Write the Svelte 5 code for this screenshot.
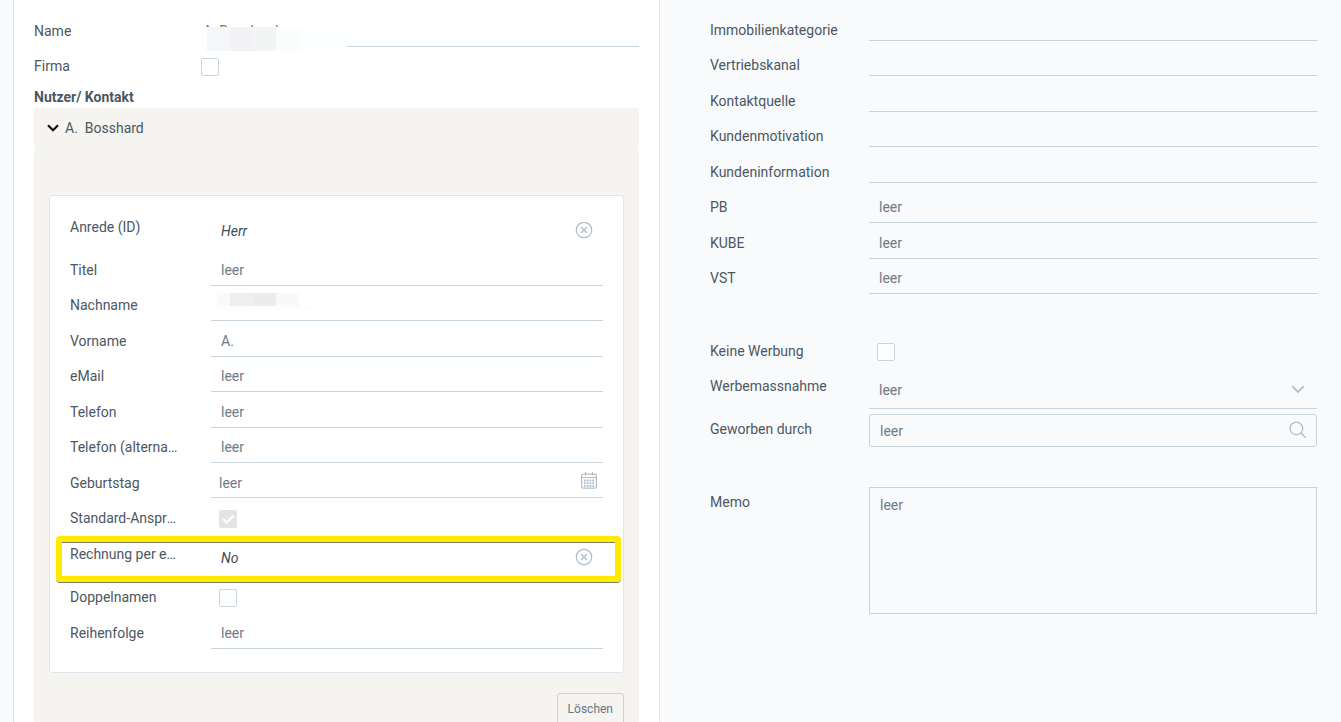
<script>
    let contact = $state({
        anrede: 'Herr',
        titel: '',
        nachname: '',
        vorname: 'A.',
        email: '',
        telefon: '',
        telefonAlt: '',
        geburtstag: '',
        rechnung: 'No',
        reihenfolge: ''
    });

    let open = $state(true);
    let name = $state('A. Bosshard');

    const contactRows = [
        { id: 'anrede', label: 'Anrede (ID)', type: 'clear' },
        { id: 'titel', label: 'Titel', type: 'text' },
        { id: 'nachname', label: 'Nachname', type: 'masked' },
        { id: 'vorname', label: 'Vorname', type: 'text' },
        { id: 'email', label: 'eMail', type: 'text' },
        { id: 'telefon', label: 'Telefon', type: 'text' },
        { id: 'telefonAlt', label: 'Telefon (alternativ)', type: 'text' },
        { id: 'geburtstag', label: 'Geburtstag', type: 'date' },
        { id: 'standard', label: 'Standard-Ansprechpartner', type: 'check', checked: true },
        { id: 'rechnung', label: 'Rechnung per eMail', type: 'clear', highlight: true },
        { id: 'doppelnamen', label: 'Doppelnamen', type: 'check' },
        { id: 'reihenfolge', label: 'Reihenfolge', type: 'text' }
    ];

    const infoRows = [
        { id: 'kategorie', label: 'Immobilienkategorie', empty: true },
        { id: 'kanal', label: 'Vertriebskanal', empty: true },
        { id: 'quelle', label: 'Kontaktquelle', empty: true },
        { id: 'motivation', label: 'Kundenmotivation', empty: true },
        { id: 'information', label: 'Kundeninformation', empty: true },
        { id: 'pb', label: 'PB' },
        { id: 'kube', label: 'KUBE' },
        { id: 'vst', label: 'VST' }
    ];
</script>

<main>
    <section class="panel">
        <div class="rows wide">
            <div class="row">
                <label for="name">Name</label>
                <div class="control">
                    <input id="name" type="text" bind:value={name} />
                    <svg class="mask name-mask" width="160" height="25" aria-hidden="true">
                        <rect width="160" height="25" fill="#fff" />
                        <rect x="20" width="23" height="24" fill="#f5f6f8" />
                        <rect x="43" width="23" height="24" fill="#f2f2f4" />
                        <rect x="66" width="23" height="24" fill="#f3f4f4" />
                        <rect x="89" y="3" width="24" height="21" fill="#fbfcfc" />
                        <rect x="113" y="3" width="47" height="21" fill="#fdfefe" />
                    </svg>
                </div>
            </div>
            <div class="row">
                <label for="firma">Firma</label>
                <div class="control"><input id="firma" type="checkbox" /></div>
            </div>
        </div>

        <h2>Nutzer/ Kontakt</h2>
        <button class="accordion" aria-expanded={open} onclick={() => (open = !open)}>
            <svg width="12" height="8" viewBox="0 0 12 8" aria-hidden="true">
                <path d="M1 1.2 6 6.2 11 1.2" fill="none" stroke="#111" stroke-width="2.2" />
            </svg>
            <span>A.&nbsp; Bosshard</span>
        </button>

        {#if open}
            <div class="accordion-body">
                <div class="card rows">
                    {#each contactRows as row (row.id)}
                        <div class="row" class:tall={row.type === 'clear'} class:highlight={row.highlight}>
                            <label for={row.id}>{row.label}</label>
                            <div class="control">
                                {#if row.type === 'check'}
                                    <input id={row.id} type="checkbox" checked={row.checked} disabled={row.checked} />
                                {:else if row.type === 'clear'}
                                    <input id={row.id} class="chosen" type="text" bind:value={contact[row.id]} />
                                    <button class="icon clear" aria-label="{row.label} leeren" onclick={() => (contact[row.id] = '')}>
                                        <svg width="18" height="18" viewBox="0 0 18 18" fill="none" stroke="#b0bfcc" aria-hidden="true">
                                            <circle cx="9" cy="9" r="7.7" stroke-width="1.3" />
                                            <path d="M6.1 6.1 11.9 11.9M11.9 6.1 6.1 11.9" stroke-width="1.4" />
                                        </svg>
                                    </button>
                                {:else if row.type === 'date'}
                                    <input id={row.id} class="date" type="text" placeholder="leer" bind:value={contact[row.id]} />
                                    <button class="icon calendar" aria-label="Kalender">
                                        <svg width="16" height="17" viewBox="0 0 16 17" fill="none" stroke="#b0bfcc" aria-hidden="true">
                                            <rect x="0.6" y="2.2" width="14.8" height="14" rx="1.6" stroke-width="1.2" />
                                            <path d="M1 5.5H15M4.5 0V3.6M11.5 0V3.6" stroke-width="1.1" />
                                            <path d="M2.9 8.5H13.1M2.9 11.2H13.1M2.9 13.9H13.1" stroke-width="1.8" stroke-dasharray="1.8 1" />
                                        </svg>
                                    </button>
                                {:else}
                                    <input id={row.id} type="text" placeholder={row.type === 'masked' ? '' : 'leer'} bind:value={contact[row.id]} />
                                    {#if row.type === 'masked'}
                                        <svg class="mask field-mask" width="100" height="17" aria-hidden="true">
                                            <rect width="13" height="13" fill="#f9fafa" />
                                            <rect x="13" width="23" height="13" fill="#eeeff1" />
                                            <rect x="36" width="23" height="13" fill="#ebecee" />
                                            <rect x="59" width="23" height="13" fill="#f9f9fa" />
                                            <rect y="13" width="100" height="4" fill="#fdfdfd" />
                                        </svg>
                                    {/if}
                                {/if}
                            </div>
                        </div>
                    {/each}
                </div>
                <button class="delete">Löschen</button>
            </div>
        {/if}
    </section>

    <section class="info">
        <div class="rows wide">
            {#each infoRows as row (row.id)}
                <div class="row" class:low={row.empty}>
                    <label for={row.id}>{row.label}</label>
                    <div class="control">
                        <input id={row.id} type="text" placeholder={row.empty ? '' : 'leer'} />
                    </div>
                </div>
            {/each}
        </div>

        <div class="rows wide">
            <div class="row">
                <label for="werbung">Keine Werbung</label>
                <div class="control"><input id="werbung" type="checkbox" /></div>
            </div>
            <div class="row tall">
                <label for="massnahme">Werbemassnahme</label>
                <div class="control">
                    <select id="massnahme">
                        <option>leer</option>
                    </select>
                    <svg class="icon arrow" width="14" height="9" viewBox="0 0 14 9" aria-hidden="true">
                        <path d="M1.3 1.3 7 7 12.7 1.3" fill="none" stroke="#b0bfcc" stroke-width="1.9" />
                    </svg>
                </div>
            </div>
            <div class="row">
                <label for="geworben">Geworben durch</label>
                <div class="control">
                    <input id="geworben" class="boxed" type="text" placeholder="leer" />
                    <button class="icon search" aria-label="Suchen">
                        <svg width="18" height="18" viewBox="0 0 18 18" fill="none" stroke="#b0bfcc" aria-hidden="true">
                            <circle cx="7.4" cy="7.4" r="6.3" stroke-width="1.3" />
                            <path d="M11.8 11.8 16.8 16.8" stroke-width="1.6" />
                        </svg>
                    </button>
                </div>
            </div>
        </div>

        <div class="rows wide">
            <div class="row">
                <label for="memo">Memo</label>
                <div class="control"><textarea id="memo" placeholder="leer"></textarea></div>
            </div>
        </div>
    </section>
</main>

<style>
    :global(body) {
        background: #f9fafc;
    }

    main {
        display: grid;
        grid-template-columns: 1fr 1fr;
        gap: 10px;
        height: 100vh;
        padding: 0 24px 0 13px;
        box-sizing: border-box;
        overflow: hidden;
        color: #4b5763;
        font: 14px/20px Roboto, sans-serif;
    }

    .panel {
        padding: 13px 20px 0;
        background: #fff;
        border: 1px solid #dfe5eb;
        border-width: 0 1px;
    }

    .info {
        display: flex;
        flex-direction: column;
        gap: 37px;
        padding: 12px 0 0 40px;
    }

    .row {
        position: relative;
        display: grid;
        grid-template-columns: 141px 1fr;
        min-height: 36px;
    }

    .wide .row {
        grid-template-columns: 159px 1fr;
    }

    .card .row:nth-child(even),
    .wide .row:nth-child(odd) {
        min-height: 35px;
    }

    .rows .row.tall {
        min-height: 43px;
    }

    label {
        max-width: 108px;
        height: 35px;
        line-height: 36px;
        overflow: hidden;
        text-overflow: ellipsis;
        white-space: nowrap;
    }

    .wide label {
        max-width: none;
    }

    .control {
        position: relative;
    }

    input,
    select,
    textarea,
    button {
        margin: 0;
        box-sizing: border-box;
        background: none;
        color: inherit;
        font: inherit;
        border-radius: 0;
        outline: none;
    }

    input[type='text'],
    select {
        display: block;
        width: 100%;
        height: 34px;
        padding: 2px 10px 0;
        border: 0;
        border-bottom: 1px solid #c7d4dd;
        color: #6b7782;
    }

    ::placeholder {
        color: #6f7b86;
        opacity: 1;
    }

    .low input[type='text'] {
        height: 29px;
    }

    .tall select {
        height: 41px;
        padding: 4px 10px 0;
        appearance: none;
    }

    .tall input.chosen {
        height: 42px;
        padding-top: 2px;
        border: 0;
        color: #404c58;
        font-style: italic;
    }

    input[type='text'].date {
        height: 33px;
        padding: 4px 8px 0;
    }

    input[type='text'].boxed {
        height: 33px;
        margin-top: 3px;
        padding: 0 10px;
        border: 1px solid #c7d4dd;
        border-radius: 3px;
    }

    textarea {
        display: block;
        width: 100%;
        height: 127px;
        margin-top: 3px;
        padding: 7px 10px;
        border: 1px solid #c7d4dd;
        resize: none;
    }

    input[type='checkbox'] {
        display: grid;
        place-items: center;
        width: 18px;
        height: 18px;
        margin: 10px 0 0 8px;
        appearance: none;
        background: #fff;
        border: 1px solid #c7d4dd;
        border-radius: 2px;
    }

    input[type='checkbox']:disabled {
        background: #e4e4e4;
        border-color: #e4e4e4;
    }

    input[type='checkbox']:checked::before {
        content: '';
        width: 9px;
        height: 4px;
        margin-bottom: 3px;
        border: solid #fff;
        border-width: 0 0 2px 2px;
        transform: rotate(-45deg);
    }

    .icon {
        position: absolute;
        padding: 0;
        border: 0;
        line-height: 0;
    }

    .clear {
        top: 12px;
        right: 10px;
    }

    .calendar {
        top: 7px;
        right: 6px;
    }

    .arrow {
        top: 17px;
        right: 12px;
    }

    .search {
        top: 10px;
        right: 10px;
    }

    .mask {
        position: absolute;
    }

    .name-mask {
        top: 14px;
        left: -6px;
    }

    .field-mask {
        top: 6px;
        left: 6px;
    }

    h2 {
        margin: 3px 0 1px;
        font-size: 14px;
        font-weight: 700;
        line-height: 20px;
    }

    .accordion {
        display: flex;
        align-items: center;
        gap: 6px;
        width: 100%;
        height: 41px;
        padding: 0 13px 2px;
        background: #f5f4f0;
        border: 0;
        border-radius: 4px;
    }

    .accordion-body {
        display: flex;
        flex-direction: column;
        align-items: flex-end;
        gap: 20px;
        padding: 46px 15px 20px;
        background: #f5f4f0;
        border-radius: 4px;
    }

    .card {
        width: 100%;
        padding: 13px 20px 22px;
        box-sizing: border-box;
        background: #fff;
        border: 1px solid #dfe5eb;
        border-radius: 3px;
    }

    .highlight::after {
        content: '';
        position: absolute;
        inset: 0 -18px -3px -14px;
        border: 6px solid #ffea00;
        border-radius: 4px;
        box-shadow: inset 0 1px #7f7f70, 0 1px #7f7f70;
        pointer-events: none;
    }

    .delete {
        height: 32px;
        padding: 0 10px;
        border: 1px solid #c7d4dd;
        border-radius: 3px;
        color: #6b7782;
        font-size: 12px;
    }
</style>
